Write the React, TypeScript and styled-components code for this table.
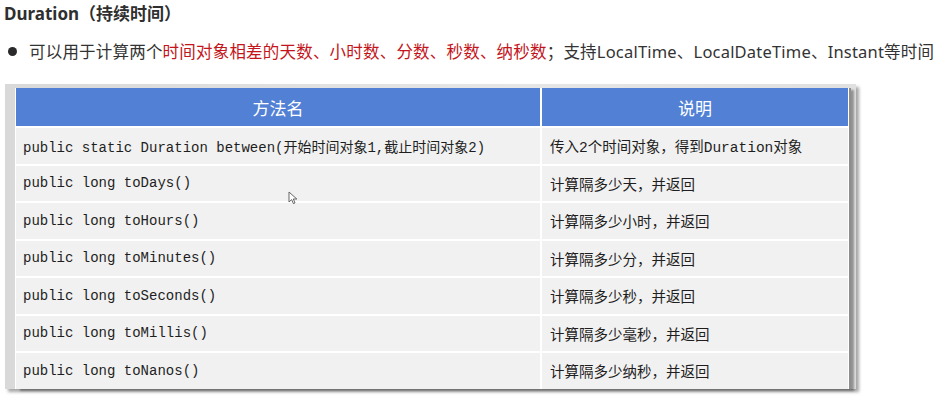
import React, { FC } from 'react';
import styled, { createGlobalStyle } from 'styled-components';

const TEXT = '#333333';
const RED = '#c3151b';
const HEAD_BLUE = '#5280d4';
const CELL_GREY = '#f1f1f1';

const GlobalStyle = createGlobalStyle`
  html, body {
    margin: 0;
    padding: 0;
    background: #ffffff;
  }
`;

const Page = styled.div`
  position: relative;
  width: 934px;
  height: 395px;
  overflow: hidden;
  font-family: 'Noto Sans', 'Noto Sans CJK SC', sans-serif;
  color: ${TEXT};
`;

const Title = styled.h1`
  margin: 0;
  padding: 3px 0 0 4px;
  height: 25px;
  font-size: 17px;
  font-weight: 700;
  line-height: 22px;
  color: #2f2f2f;
`;

const BulletLine = styled.div`
  display: flex;
  align-items: center;
  gap: 12px;
  margin-top: 11px;
  padding-left: 8px;
  height: 24px;
  font-size: 16.5px;
  white-space: nowrap;
  letter-spacing: 0.2px;
`;

const Dot = styled.span`
  width: 9px;
  height: 9px;
  border-radius: 50%;
  background: #2a2a2a;
  flex: none;
`;

const Red = styled.span`
  color: ${RED};
`;

const Frame = styled.div`
  margin: 21px 0 0 5px;
  width: 841px;
  padding: 4px 0 0 10px;
  background: linear-gradient(to right, #d9d9d9, #e6e6e6 60%, #e0e0e0);
  box-shadow: 3px 3px 3px rgba(0, 0, 0, 0.35);
`;

const Table = styled.div`
  display: grid;
  grid-template-columns: 524px 306px;
  grid-template-rows: 38px repeat(7, 35.5px);
  gap: 2px;
  width: 832px;
  background: #ffffff;
  border-right: 1px solid #ffffff;
  border-left: 1px solid #ffffff;
  box-shadow: 2px 0 0 #8e8e8e, 5px 2px 2px rgba(0, 0, 0, 0.35);
`;

const HeadCell = styled.div`
  display: flex;
  align-items: center;
  justify-content: center;
  background: ${HEAD_BLUE};
  color: #ffffff;
  font-family: 'Noto Sans CJK SC', sans-serif;
  font-size: 17px;
`;

const Cell = styled.div<{ $code?: boolean }>`
  display: flex;
  align-items: center;
  padding-left: ${p => (p.$code ? '7px' : '8px')};
  background: ${CELL_GREY};
  color: #1e1e1e;
  font-family: 'Liberation Mono', 'Noto Sans CJK SC', monospace;
  font-size: ${p => (p.$code ? '14px' : '14.5px')};
  white-space: nowrap;
`;

const Cursor = styled.svg`
  position: absolute;
  left: 288px;
  top: 191px;
`;

const rows = [
  { method: 'public static Duration between(开始时间对象1,截止时间对象2)', desc: '传入2个时间对象，得到Duration对象' },
  { method: 'public long toDays()', desc: '计算隔多少天，并返回' },
  { method: 'public long toHours()', desc: '计算隔多少小时，并返回' },
  { method: 'public long toMinutes()', desc: '计算隔多少分，并返回' },
  { method: 'public long toSeconds()', desc: '计算隔多少秒，并返回' },
  { method: 'public long toMillis()', desc: '计算隔多少毫秒，并返回' },
  { method: 'public long toNanos()', desc: '计算隔多少纳秒，并返回' },
];

const App: FC = () => (
  <Page>
    <GlobalStyle />
    <Title>Duration（持续时间）</Title>
    <BulletLine>
      <Dot />
      <span>
        可以用于计算两个<Red>时间对象相差的天数、小时数、分数、秒数、纳秒数</Red>；支持LocalTime、LocalDateTime、Instant等时间
      </span>
    </BulletLine>
    <Frame>
      <Table>
        <HeadCell>方法名</HeadCell>
        <HeadCell>说明</HeadCell>
        {rows.map(row => (
          <React.Fragment key={row.method}>
            <Cell $code>{row.method}</Cell>
            <Cell>{row.desc}</Cell>
          </React.Fragment>
        ))}
      </Table>
    </Frame>
    <Cursor width="10" height="14" viewBox="0 0 10 14">
      <path d="M1 1 L1 11 L3.6 8.6 L5.4 12.6 L7 11.9 L5.3 8 L8.8 8 Z" fill="#ffffff" stroke="#555555" strokeWidth="0.9" strokeLinejoin="round" />
    </Cursor>
  </Page>
);

export default App;
